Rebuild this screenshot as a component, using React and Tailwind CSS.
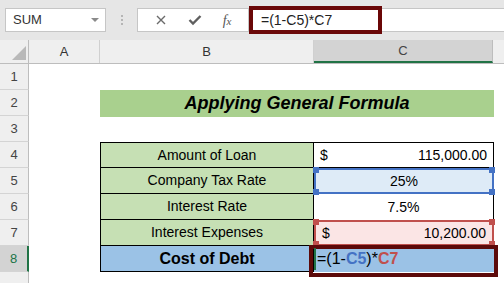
import React from "react";

const font = { fontFamily: '"Liberation Sans", Arial, sans-serif' };

const RowHead = ({ n, active }) => (
  <div
    className={`w-[29px] shrink-0 h-full flex items-center justify-center text-[13px] border-b border-[#d4d4d4] ${
      active
        ? "bg-[#d3d3d3] text-[#217346] border-r-2 border-r-[#217346]"
        : "bg-[#efefef] text-[#444] border-r border-r-[#bdbdbd]"
    }`}
  >
    {n}
  </div>
);

const Handle = ({ pos, color }) => (
  <span className={`absolute w-[6px] h-[6px] ${color} ${pos}`} />
);

const App = () => {
  return (
    <div className="w-[504px] h-[283px] overflow-hidden bg-white relative" style={font}>
      {/* formula bar */}
      <div className="h-[40px] bg-[#e6e6e6] flex items-center">
        <div className="ml-[5px] w-[101px] h-[24px] bg-white border border-[#c6c6c6] flex items-center justify-between pl-[7px] pr-[6px]">
          <span className="text-[13px] text-[#333]">SUM</span>
          <span className="w-0 h-0 border-l-[4px] border-r-[4px] border-t-[4px] border-l-transparent border-r-transparent border-t-[#8a8a8a]" />
        </div>
        <div className="w-[31px] flex flex-col items-center gap-[2px]">
          <span className="w-[2px] h-[2px] bg-[#b5b5b5]" />
          <span className="w-[2px] h-[2px] bg-[#b5b5b5]" />
          <span className="w-[2px] h-[2px] bg-[#b5b5b5]" />
        </div>
        <div className="w-[112px] h-[24px] bg-white border border-[#c6c6c6] flex items-center justify-around px-[6px]">
          <svg width="12" height="12" viewBox="0 0 12 12">
            <path d="M2 2 L10 10 M10 2 L2 10" stroke="#6b6b6b" strokeWidth="1.4" />
          </svg>
          <svg width="14" height="12" viewBox="0 0 14 12">
            <path d="M1.5 6 L5 9.5 L12.5 2" stroke="#5f5f5f" strokeWidth="2.4" fill="none" />
          </svg>
          <span className="text-[14px] italic text-[#555]" style={{ fontFamily: '"Liberation Serif", serif' }}>
            f<span className="text-[11px]">x</span>
          </span>
        </div>
        <div className="flex-1 h-[24px] bg-white border-y border-[#c6c6c6] relative">
          <div className="absolute left-0 top-[-3px] w-[133px] h-[28px] border-[4px] border-[#6a0707] bg-white flex items-center pl-[8px] text-[14px] text-[#222]">
            =(1-C5)*C7
          </div>
        </div>
      </div>

      {/* column headers */}
      <div className="h-[24px] flex bg-[#efefef] border-b border-[#bdbdbd]">
        <div className="w-[29px] shrink-0 border-r border-[#bdbdbd] relative">
          <svg className="absolute left-[12px] top-[6px]" width="14" height="14" viewBox="0 0 14 14">
            <path d="M14 0 L14 14 L0 14 Z" fill="#b9b9b9" />
          </svg>
        </div>
        <div className="w-[71px] shrink-0 border-r border-[#d0d0d0] flex items-center justify-center text-[13px] text-[#333]">A</div>
        <div className="w-[214px] shrink-0 border-r border-[#d0d0d0] flex items-center justify-center text-[13px] text-[#333]">B</div>
        <div className="w-[179px] shrink-0 bg-[#d3d3d3] border-b-2 border-[#217346] border-r border-r-[#bdbdbd] flex items-center justify-center text-[13px] text-[#444]">C</div>
        <div className="flex-1" />
      </div>

      {/* row 1 */}
      <div className="h-[26px] flex">
        <RowHead n="1" />
      </div>

      {/* row 2 */}
      <div className="h-[26px] flex">
        <RowHead n="2" />
        <div className="w-[71px] shrink-0" />
        <div className="w-[394px] shrink-0 h-[27px] bg-[#a9d08e] flex items-center justify-center text-[18px] font-bold italic text-black">
          Applying General Formula
        </div>
      </div>

      {/* row 3 */}
      <div className="h-[26px] flex">
        <RowHead n="3" />
      </div>

      {/* row 4 */}
      <div className="h-[26px] flex">
        <RowHead n="4" />
        <div className="w-[71px] shrink-0" />
        <div className="w-[214px] shrink-0 bg-[#c6e0b4] border border-black flex items-center justify-center text-[14px] text-black">
          Amount of Loan
        </div>
        <div className="w-[180px] shrink-0 border-y border-r border-black flex items-center justify-between px-[6px] text-[14px] text-black">
          <span>$</span>
          <span>115,000.00</span>
        </div>
      </div>

      {/* row 5 */}
      <div className="h-[26px] flex">
        <RowHead n="5" />
        <div className="w-[71px] shrink-0" />
        <div className="w-[214px] shrink-0 bg-[#c6e0b4] border-x border-b border-black flex items-center justify-center text-[14px] text-black">
          Company Tax Rate
        </div>
        <div className="w-[180px] shrink-0 relative bg-[#deebf7] border-2 border-[#4472c4] flex items-center justify-center text-[14px] text-black">
          25%
          <Handle pos="-left-[3px] -top-[3px]" color="bg-[#4472c4]" />
          <Handle pos="-right-[3px] -top-[3px]" color="bg-[#4472c4]" />
          <Handle pos="-left-[3px] -bottom-[3px]" color="bg-[#4472c4]" />
          <Handle pos="-right-[3px] -bottom-[3px]" color="bg-[#4472c4]" />
        </div>
      </div>

      {/* row 6 */}
      <div className="h-[26px] flex">
        <RowHead n="6" />
        <div className="w-[71px] shrink-0" />
        <div className="w-[214px] shrink-0 bg-[#c6e0b4] border-x border-b border-black flex items-center justify-center text-[14px] text-black">
          Interest Rate
        </div>
        <div className="w-[180px] shrink-0 border-r border-black flex items-center justify-center text-[14px] text-black">
          7.5%
        </div>
      </div>

      {/* row 7 */}
      <div className="h-[26px] flex">
        <RowHead n="7" />
        <div className="w-[71px] shrink-0" />
        <div className="w-[214px] shrink-0 bg-[#c6e0b4] border-x border-b border-black flex items-center justify-center text-[14px] text-black">
          Interest Expenses
        </div>
        <div className="w-[180px] shrink-0 relative bg-[#fbe5e5] border-2 border-[#c0504d] flex items-center justify-between px-[6px] text-[14px] text-black">
          <span>$</span>
          <span>10,200.00</span>
          <Handle pos="-left-[3px] -top-[3px]" color="bg-[#c0504d]" />
          <Handle pos="-right-[3px] -top-[3px]" color="bg-[#c0504d]" />
          <Handle pos="-left-[3px] -bottom-[3px]" color="bg-[#c0504d]" />
          <Handle pos="-right-[3px] -bottom-[3px]" color="bg-[#c0504d]" />
        </div>
      </div>

      {/* row 8 */}
      <div className="h-[26px] flex">
        <RowHead n="8" active />
        <div className="w-[71px] shrink-0" />
        <div className="w-[214px] shrink-0 bg-[#9bc2e6] border-x border-b border-black flex items-center justify-center text-[16px] font-bold text-black">
          Cost of Debt
        </div>
        <div className="w-[180px] shrink-0 relative bg-[#9bc2e6] flex items-center pl-[3px] text-[16px] text-black">
          <span className="absolute -left-[5px] -top-[1px] -right-[4px] -bottom-[5px] border-[4px] border-[#5c0a0a]" />
          <span className="absolute left-0 top-[2px] bottom-[2px] w-[2px] bg-[#217346]" />
          <span className="relative">
            =(1-<span className="text-[#4472c4] font-bold">C5</span>)*<span className="text-[#c0504d] font-bold">C7</span>
          </span>
        </div>
      </div>

      {/* row 9 */}
      <div className="h-[26px] flex">
        <div className="w-[29px] shrink-0 h-full bg-[#efefef] border-r border-[#bdbdbd]" />
      </div>
    </div>
  );
};

export default App;
